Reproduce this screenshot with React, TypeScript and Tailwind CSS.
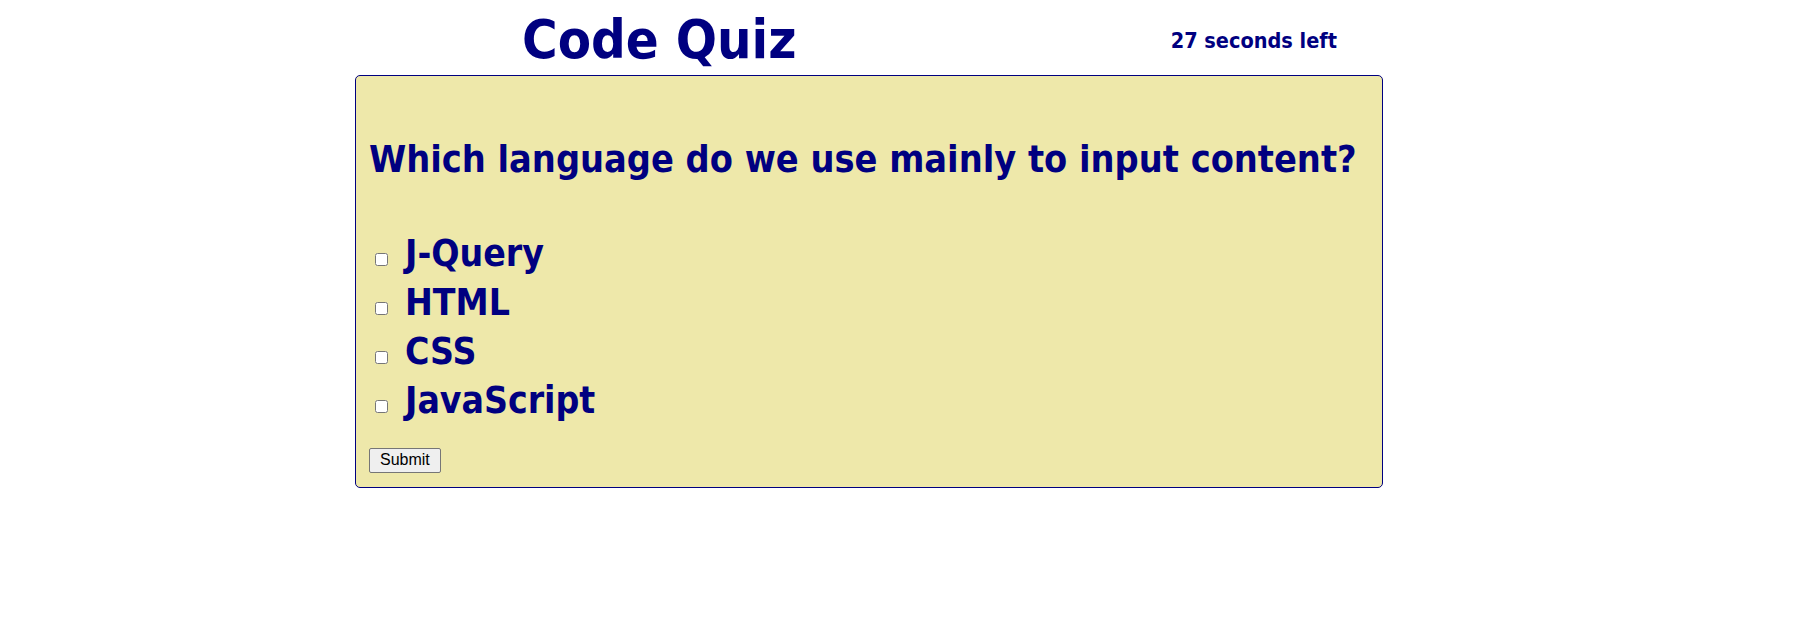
import { useState } from 'react'

const choices = ['J-Query', 'HTML', 'CSS', 'JavaScript']

export default function App() {
  const [picked, setPicked] = useState<string[]>([])

  const toggle = (c: string) =>
    setPicked((p) => (p.includes(c) ? p.filter((x) => x !== c) : [...p, c]))

  return (
    <div className="min-h-screen bg-white text-[#000080] font-['DejaVu_Sans_Condensed','DejaVu_Sans',sans-serif]">
      <div className="ml-[355px] w-[1028px]">
        {/* header */}
        <header className="flex h-[75px] items-start">
          <h1 className="mt-[13px] pl-[167px] text-[54px] font-bold leading-none">Code Quiz</h1>
          <p className="ml-auto mr-[46px] mt-[30px] text-[21.5px] font-bold leading-none">27 seconds left</p>
        </header>

        {/* question card */}
        <div className="rounded-[5px] border border-[#000080] bg-[#EEE8AA] px-[13px] pt-[65px] pb-[14px]">
          <h2 className="whitespace-nowrap text-[37.5px] font-bold leading-none">
            Which language do we use mainly to input content?
          </h2>
          <ul className="mt-[50px]">
            {choices.map((c) => (
              <li key={c} className="h-[49px] text-[37px] font-bold leading-[49px]">
                <label>
                  <input
                    type="checkbox"
                    checked={picked.includes(c)}
                    onChange={() => toggle(c)}
                    className="ml-[6px] mr-[17px] mb-[3px] h-[13px] w-[13px]"
                  />
                  {c}
                </label>
              </li>
            ))}
          </ul>
          <button className="mt-[23px] h-[25px] rounded-[2px] border border-[#767676] bg-[#efefef] px-[10px] font-['Liberation_Sans',Arial,sans-serif] text-[16px] leading-none text-black">
            Submit
          </button>
        </div>
      </div>
    </div>
  )
}
